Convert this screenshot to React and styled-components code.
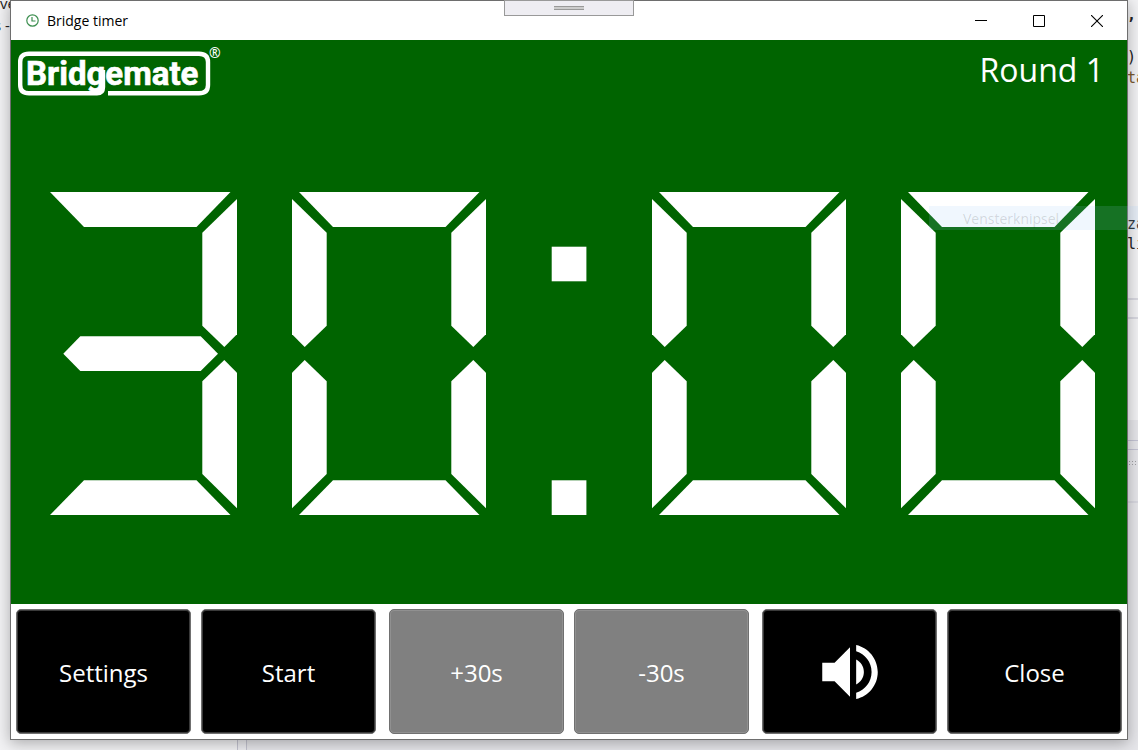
import React from "react";
import styled, { createGlobalStyle } from "styled-components";

const Global = createGlobalStyle`
  * { box-sizing: border-box; }
  body { margin: 0; overflow: hidden; background: #f2f2f4; font-family: "Open Sans", "Noto Sans", sans-serif; }
`;

const Desktop = styled.div`
  position: relative;
  min-height: 100vh;
  padding: 0 10px 10px;
  display: flex;
  overflow: hidden;
`;

const Backdrop = styled.div`
  position: absolute;
  inset: 0;
  display: flex;
  flex-direction: column;
  justify-content: flex-end;
`;

const PaneRow = styled.div`
  display: flex;
  height: 330px;
`;

const Splitter = styled.div`
  width: 10px;
  margin-left: 237px;
  border: solid #c4c4d0;
  border-width: 0 1px;
  background: #ececf0;
`;

const SidePane = styled.div`
  flex: 1;
  background: #e6e6ea;
`;

const CodeText = styled.span`
  position: absolute;
  top: ${(p) => p.$top}px;
  left: ${(p) => p.$left};
  font: ${(p) => (p.$bold ? 700 : 400)} 15px/20px ${(p) => (p.$mono ? '"DejaVu Sans Mono", monospace' : '"Open Sans", sans-serif')};
  color: ${(p) => p.$color || "#222"};
  white-space: nowrap;
`;

const Divider = styled.hr`
  position: absolute;
  top: ${(p) => p.$top}px;
  right: 0;
  width: 10px;
  margin: 0;
  border: 0;
  border-top: ${(p) => (p.$thin ? 1 : 2)}px solid ${(p) => (p.$thin ? "#c4c4d4" : "#d8d8e0")};
`;

const DragDots = styled.div`
  position: absolute;
  top: 460px;
  right: 0;
  width: 10px;
  height: 6px;
  background: radial-gradient(circle, #a0a0a4 30%, transparent 40%) 0 0 / 3px 3px;
`;

const Window = styled.main`
  position: relative;
  flex: 1;
  display: flex;
  flex-direction: column;
  border: 1px solid #6e6e6e;
  background: #fff;
  box-shadow: 0 3px 14px rgba(0, 0, 0, 0.3);
`;

const TitleBar = styled.header`
  display: flex;
  align-items: center;
  height: 39px;
  padding: 0 1px 0 15px;
`;

const Title = styled.h1`
  flex: 1;
  margin: 0 0 0 8px;
  font-size: 14px;
  line-height: 20px;
  font-weight: 400;
  color: #000;
`;

const CaptionButton = styled.button`
  display: grid;
  place-items: center;
  width: 58px;
  height: 39px;
  padding: 0;
  border: 0;
  background: none;
`;

const Grip = styled.div`
  position: absolute;
  top: -1px;
  left: 50%;
  transform: translateX(-50%);
  display: grid;
  place-items: center;
  width: 130px;
  height: 16px;
  border: 1px solid #999;
  background: #eeedf2;
`;

const GripLines = styled.div`
  width: 30px;
  height: 4px;
  border: solid #999;
  border-width: 1px 0;
  background: #ccc;
`;

const Board = styled.section`
  flex: 1;
  display: flex;
  flex-direction: column;
  background: #006400;
  color: #fff;
`;

const BoardHeader = styled.div`
  display: flex;
  justify-content: space-between;
  height: 63px;
  padding: 6px 23px 0 6px;
`;

const Round = styled.p`
  margin: 0;
  font-size: 32px;
  line-height: 48px;
`;

const Clock = styled.div`
  flex: 1;
  display: grid;
  grid-template-columns: 194fr 194fr 56fr 194fr 194fr;
  align-items: center;
  gap: 55px;
  padding: 0 32px;

  svg { display: block; width: 100%; }
`;

const Controls = styled.footer`
  display: flex;
  gap: 13px;
  padding: 5px;
`;

const Pair = styled.div`
  flex: 1;
  display: grid;
  grid-template-columns: 1fr 1fr;
  gap: 10px;
`;

const ControlButton = styled.button`
  display: grid;
  place-items: center;
  height: 125px;
  padding: ${(p) => (p.$icon ? 0 : 2)}px 0 0;
  border: 1px solid #707070;
  border-radius: 5px;
  background: ${(p) => (p.disabled ? "#808080" : "#000")};
  box-shadow: inset 0 0 0 1px ${(p) => (p.disabled ? "#909090" : "#3a3a3a")};
  color: #fff;
  font: 24px/32px "Open Sans", "Noto Sans", sans-serif;
`;

const SnipLabel = styled.div`
  position: absolute;
  top: 206px;
  right: 0;
  width: 209px;
  height: 24px;
  padding-left: 34px;
  background: rgba(152, 200, 248, 0.145);
  color: rgba(0, 0, 0, 0.14);
  font-size: 14px;
  line-height: 25px;
`;

const SEGMENTS = {
  a: "7,0 187.5,0 153.5,35 41,35",
  b: "194,7 194,142.3 181.3,155 159.3,133.7 159.3,40.7",
  c: "181.3,168 194,180.7 194,316.3 159.3,282 159.3,189.3",
  d: "41,288.3 153.5,288.3 187.5,323 7,323",
  e: "12.7,168 34.7,189.3 34.7,282 0,316.3 0,180.7",
  f: "0,7 34.7,40.7 34.7,133.7 12.7,155 0,142.3",
  g: "20.3,161.7 37.3,144.3 157.7,144.3 175,161.7 157.7,179 37.3,179",
};

const LIT = { 0: "abcdef", 3: "abcdg" };

function Digit({ value }) {
  return (
    <svg viewBox="0 0 194 323" fill="#fff" role="img" aria-label={String(value)}>
      {LIT[value].split("").map((s) => (
        <polygon key={s} points={SEGMENTS[s]} />
      ))}
    </svg>
  );
}

function Colon() {
  return (
    <svg viewBox="0 0 56 323" fill="#fff" aria-hidden="true">
      <rect x="10.7" y="54.7" width="34.7" height="34.6" />
      <rect x="10.7" y="288.3" width="34.7" height="34.7" />
    </svg>
  );
}

function Logo() {
  return (
    <svg width="206" height="52" viewBox="0 0 206 52" role="img" aria-label="Bridgemate">
      <path
        d="M91 47.300H182Q191 47.300 191 39V16Q191 7.700 182 7.700H12Q3.200 7.700 3.200 16V39Q3.200 47.300 12 47.300H80Q86 47.300 86 41V24"
        fill="none" stroke="#fff" strokeWidth="4.400"
      />
      <text x="9" y="39" fill="#fff" stroke="#fff" strokeWidth="0.600" fontFamily="Roboto, sans-serif" fontWeight="700" fontSize="33">
        Bridgemate
      </text>
      <text x="192" y="12" fill="#fff" fontFamily='"Open Sans", sans-serif' fontWeight="600" fontSize="14">®</text>
    </svg>
  );
}

export default function App() {
  return (
    <Desktop>
      <Global />
      <Backdrop aria-hidden="true">
        <PaneRow><Splitter /><SidePane /></PaneRow>
        <CodeText $top={-7} $left="0px">ve</CodeText>
        <CodeText $top={15} $left="-6px">s -</CodeText>
        <CodeText $top={5} $left="calc(100% - 11px)" $mono $bold>,</CodeText>
        <CodeText $top={47} $left="calc(100% - 11px)" $mono>)</CodeText>
        <CodeText $top={68} $left="calc(100% - 11px)" $mono $color="#7a5a30">ta</CodeText>
        <CodeText $top={214} $left="calc(100% - 11px)" $mono>za</CodeText>
        <CodeText $top={234} $left="calc(100% - 11px)" $mono>li</CodeText>
        <Divider $top={298} />
        <Divider $top={317} />
        <Divider $top={440} $thin />
        <Divider $top={449} $thin />
        <DragDots />
        <Divider $top={501} />
      </Backdrop>
      <Window>
        <TitleBar>
          <svg width="13" height="13" viewBox="0 0 13 13" fill="none" stroke="#3d8f50" strokeWidth="1.200" aria-hidden="true">
            <circle cx="6.500" cy="6.500" r="5.700" />
            <path d="M6 3V7H9.500" />
          </svg>
          <Title>Bridge timer</Title>
          <CaptionButton aria-label="Minimize">
            <svg width="12" height="12" stroke="#000"><path d="M0 5.500H12" /></svg>
          </CaptionButton>
          <CaptionButton aria-label="Maximize">
            <svg width="12" height="12" fill="none" stroke="#000"><path d="M.5.5H11.500V11.500H.5Z" /></svg>
          </CaptionButton>
          <CaptionButton aria-label="Close window">
            <svg width="12" height="12" fill="none" stroke="#000" strokeWidth="1.100"><path d="M0 0L12 12M12 0L0 12" /></svg>
          </CaptionButton>
        </TitleBar>
        <Board>
          <BoardHeader>
            <Logo />
            <Round>Round 1</Round>
          </BoardHeader>
          <Clock>
            <Digit value={3} />
            <Digit value={0} />
            <Colon />
            <Digit value={0} />
            <Digit value={0} />
          </Clock>
        </Board>
        <Controls>
          <Pair>
            <ControlButton>Settings</ControlButton>
            <ControlButton>Start</ControlButton>
          </Pair>
          <Pair>
            <ControlButton disabled>+30s</ControlButton>
            <ControlButton disabled>-30s</ControlButton>
          </Pair>
          <Pair>
            <ControlButton $icon aria-label="Sound">
              <svg width="74" height="74" viewBox="0 0 24 24" fill="#fff">
                <path d="M3 9v6h4l5 5V4L7 9H3zm13.500 3c0-1.770-1.020-3.290-2.500-4.030v8.050c1.480-.73 2.500-2.250 2.500-4.020zM14 3.230v2.060c2.890.86 5 3.540 5 6.710s-2.110 5.850-5 6.710v2.060c4.010-.91 7-4.490 7-8.770s-2.990-7.860-7-8.770z" />
              </svg>
            </ControlButton>
            <ControlButton>Close</ControlButton>
          </Pair>
        </Controls>
        <Grip><GripLines /></Grip>
      </Window>
      <SnipLabel>Vensterknipsel</SnipLabel>
    </Desktop>
  );
}
